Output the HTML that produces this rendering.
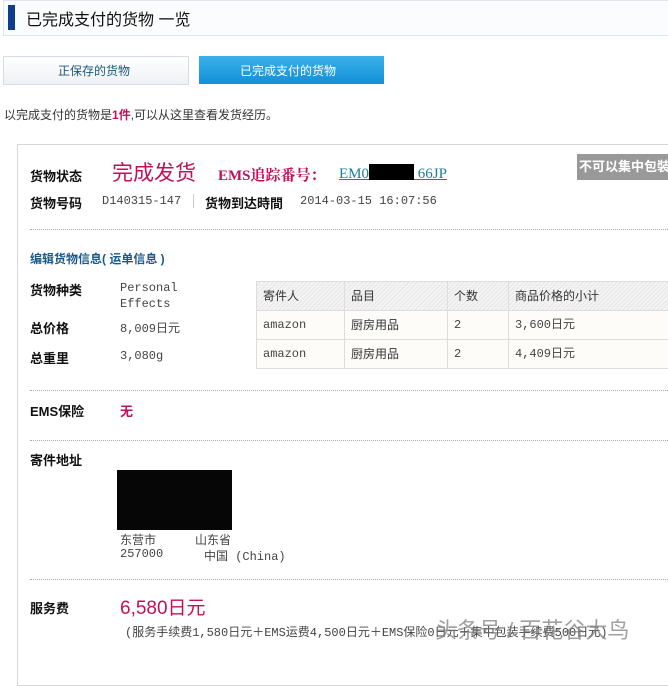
<!DOCTYPE html>
<html><head><meta charset="utf-8"><style>
body{margin:0;width:668px;height:650px;overflow:hidden;background:#fff;font-family:"Liberation Sans","Noto Sans CJK SC",sans-serif;font-size:12px;color:#333;position:relative}
.a{position:absolute;white-space:nowrap}
.b{font-weight:bold;color:#111;font-size:13px}
.m{font-family:"Liberation Mono","Noto Sans CJK SC",monospace;font-size:12px;color:#444}
.dot{position:absolute;left:30px;width:638px;border-top:1px dotted #aaa}
td{border:1px solid #ddd;padding:0 6px;height:28px;font-size:12px;color:#333;vertical-align:middle;line-height:16px}
</style></head><body>
<div class="a" style="left:3px;top:0;width:670px;height:34px;border:1px solid #dfe6ee;background:#fbfcfd"></div>
<div class="a" style="left:8px;top:5px;width:7px;height:25px;background:#0d3d8c"></div>
<div class="a" style="left:26px;top:6px;font-size:16px;color:#111">已完成支付的货物 一览</div>
<div class="a" style="left:3px;top:56px;width:184px;height:27px;border:1px solid #d6dde4;background:linear-gradient(#fff,#eef1f4)"></div>
<div class="a" style="left:58px;top:62px;font-size:12px;color:#1a5a7a">正保存的货物</div>
<div class="a" style="left:199px;top:56px;width:185px;height:28px;background:linear-gradient(#3bb1ec,#138fd6)"></div>
<div class="a" style="left:240px;top:62px;font-size:12px;color:#fff">已完成支付的货物</div>
<div class="a" style="left:4px;top:106px;font-size:12px">以完成支付的货物是<b style="color:#c0105a">1件</b>,可以从这里查看发货经历。</div>
<div class="a" style="left:17px;top:144px;width:660px;height:540px;border:1px solid #d8d8d8"></div>
<div class="a b" style="left:30px;top:166px">货物状态</div>
<div class="a" style="left:112px;top:157px;font-size:21px;color:#c0105a">完成发货</div>
<div class="a" style="left:218px;top:164px;font-size:15px;color:#c0105a;font-weight:bold;font-family:'Liberation Serif','Noto Serif CJK SC',serif">EMS追踪番号：</div>
<div class="a" style="left:339px;top:164px;font-size:15px;color:#1a7d9a;text-decoration:underline;font-family:'Liberation Serif',serif">EM0<span style="display:inline-block;width:45px;height:16px;background:#000;vertical-align:-2px"></span>&nbsp;66JP</div>
<div class="a" style="left:577px;top:154px;width:91px;height:26px;background:#999;color:#fff;font-size:13px;font-weight:bold;line-height:26px;padding-left:2px">不可以集中包裝</div>
<div class="a b" style="left:30px;top:193px">货物号码</div>
<div class="a m" style="left:102px;top:194px">D140315-147</div>
<div class="a" style="left:193px;top:194px;width:1px;height:14px;background:#ccc"></div>
<div class="a b" style="left:205px;top:193px">货物到达時間</div>
<div class="a m" style="left:300px;top:194px">2014-03-15 16:07:56</div>
<div class="dot" style="top:229px"></div>
<div class="a" style="left:30px;top:250px;font-size:12px;font-weight:bold;color:#1a5a8a">编辑货物信息( 运单信息 )</div>
<div class="a b" style="left:30px;top:280px">货物种类</div>
<div class="a m" style="left:120px;top:280px;line-height:16px">Personal<br>Effects</div>
<div class="a b" style="left:30px;top:318px">总价格</div>
<div class="a m" style="left:120px;top:319px">8,009日元</div>
<div class="a b" style="left:30px;top:348px">总重里</div>
<div class="a m" style="left:120px;top:349px">3,080g</div>
<table class="a" style="left:256px;top:281px;border-collapse:collapse;width:420px">
<tr style="background:repeating-linear-gradient(135deg,#f4f4f4 0 2px,#e6e6e6 2px 3px)"><td style="width:75px">寄件人</td><td style="width:90px">品目</td><td style="width:48px">个数</td><td>商品价格的小计</td></tr>
<tr style="background:#fdfcf8"><td class="m">amazon</td><td>厨房用品</td><td class="m">2</td><td class="m">3,600日元</td></tr>
<tr style="background:#fdfcf8"><td class="m">amazon</td><td>厨房用品</td><td class="m">2</td><td class="m">4,409日元</td></tr>
</table>
<div class="dot" style="top:390px"></div>
<div class="a b" style="left:30px;top:401px">EMS保险</div>
<div class="a" style="left:120px;top:401px;font-weight:bold;color:#c0105a;font-size:13px">无</div>
<div class="dot" style="top:440px"></div>
<div class="a b" style="left:30px;top:450px">寄件地址</div>
<div class="a" style="left:117px;top:470px;width:115px;height:60px;background:#060606"></div>
<div class="a m" style="left:120px;top:531px">东营市</div>
<div class="a m" style="left:195px;top:531px">山东省</div>
<div class="a m" style="left:120px;top:547px">257000</div>
<div class="a m" style="left:204px;top:547px">中国 (China)</div>
<div class="dot" style="top:579px"></div>
<div class="a b" style="left:30px;top:598px">服务费</div>
<div class="a" style="left:120px;top:593px;font-size:19px;color:#c0105a">6,580日元</div>
<div class="a m" style="left:125px;top:623px">(服务手续费1,580日元＋EMS运费4,500日元＋EMS保险0日元＋集中包装手续费500日元)</div>
<div class="a" style="left:435px;top:613px;font-size:22px;color:rgba(120,120,120,0.7)">头条号 / 百花谷大鸟</div>
</body></html>
